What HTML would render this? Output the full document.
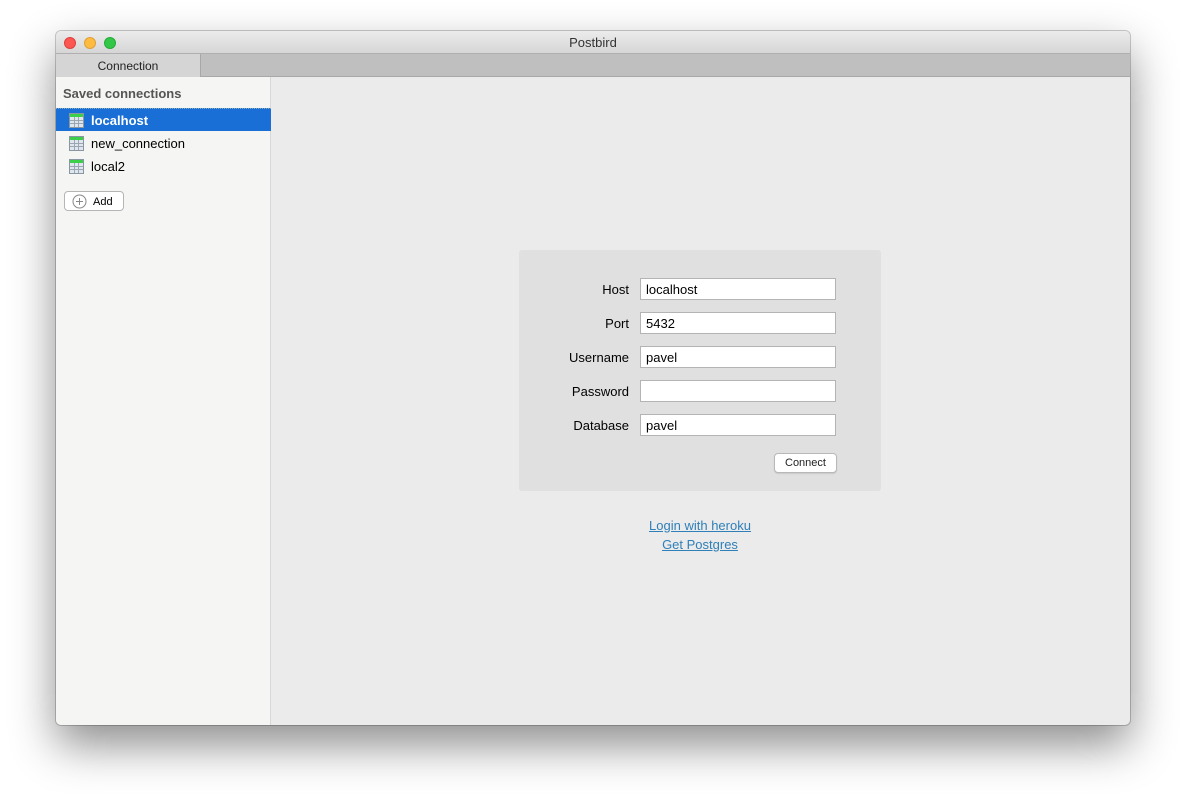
<!DOCTYPE html>
<html><head><meta charset="utf-8"><style>
*{margin:0;padding:0;box-sizing:border-box}
body{width:1186px;height:805px;background:#fff;font-family:"Liberation Sans",sans-serif;font-size:13px;position:relative;overflow:hidden;color:#000}
.win{position:absolute;left:56px;top:31px;width:1074px;height:694px;border-radius:5px;overflow:hidden;box-shadow:0 20px 45px rgba(0,0,0,.45),0 0 0 1px rgba(0,0,0,.2);background:#ebebeb}
.title{position:absolute;left:0;top:0;width:100%;height:22px;background:linear-gradient(#ececec,#d6d6d6);text-align:center;line-height:24px;color:#333;font-size:13px}
.dot{position:absolute;top:6px;width:12px;height:12px;border-radius:50%}
.tabs{position:absolute;left:0;top:22px;width:100%;height:24px;background:#c0bfc0;border-top:1px solid #b0b0b0;border-bottom:1px solid #a8a8a8}
.tab{position:absolute;left:0;top:0;width:145px;height:23px;background:#d6d5d6;border-right:1px solid #a8a8a8;text-align:center;line-height:24px;font-size:12px;color:#222}
.side{position:absolute;left:0;top:46px;width:215px;height:648px;background:#f5f5f3;border-right:1px solid #d8d8d8}
.side h3{font-size:13px;color:#555;font-weight:bold;position:absolute;left:7px;top:9px}
.item{position:absolute;left:0;width:215px;height:23px;line-height:23px;padding-left:35px;font-size:13px}
.item svg{position:absolute;left:13px;top:4px}
.sel{background:#1a6fd6;color:#fff;font-weight:bold;border-top:1px dotted #8ab}
.add{position:absolute;left:8px;top:114px;width:60px;height:20px;border:1px solid #b5b5b5;border-radius:4px;background:#fff;font-size:11px;line-height:20px;padding-left:28px}
.add svg{position:absolute;left:7px;top:2px}
.panel{position:absolute;left:463px;top:219px;width:362px;height:241px;background:#e0e0e0;border-radius:3px}
.lbl{position:absolute;width:110px;text-align:right;font-size:13px}
.inp{position:absolute;left:121px;width:196px;height:22px;background:#fff;border:1px solid #b4b4b4;padding-left:5px;line-height:22px;font-size:13px}
.btn{position:absolute;left:255px;top:203px;width:63px;height:20px;background:#fff;border:1px solid #b8b8b8;border-radius:4px;font-size:11px;text-align:center;line-height:19px;box-shadow:0 1px 1px rgba(0,0,0,.1);color:#222}
.lnk{position:absolute;left:463px;width:362px;text-align:center;color:#2f7fb8;text-decoration:underline;font-size:13px}
</style></head><body>
<div class="win">
<div class="title">Postbird
<div class="dot" style="left:8px;background:#fc5753;border:1px solid #de3f3b"></div>
<div class="dot" style="left:28px;background:#fdbc40;border:1px solid #dea034"></div>
<div class="dot" style="left:48px;background:#33c748;border:1px solid #27aa35"></div>
</div>
<div class="tabs"><div class="tab">Connection</div></div>
<div class="side">
<h3>Saved connections</h3>
<div class="item sel" style="top:31px"><svg width="15" height="15"><rect x=".5" y=".5" width="14" height="14" fill="#dfe6ee" stroke="#8a96a2"/><rect x="1" y="1" width="13" height="3" fill="#3bcf4a"/><path d="M1 7.5h13M1 10.5h13M5.5 4v10M9.5 4v10" stroke="#9aa6b2"/></svg>localhost</div>
<div class="item" style="top:55px"><svg width="15" height="15"><rect x=".5" y=".5" width="14" height="14" fill="#dfe6ee" stroke="#8a96a2"/><rect x="1" y="1" width="13" height="3" fill="#3bcf4a"/><path d="M1 7.5h13M1 10.5h13M5.5 4v10M9.5 4v10" stroke="#9aa6b2"/></svg>new_connection</div>
<div class="item" style="top:78px"><svg width="15" height="15"><rect x=".5" y=".5" width="14" height="14" fill="#dfe6ee" stroke="#8a96a2"/><rect x="1" y="1" width="13" height="3" fill="#3bcf4a"/><path d="M1 7.5h13M1 10.5h13M5.5 4v10M9.5 4v10" stroke="#9aa6b2"/></svg>local2</div>
<div class="add"><svg width="15" height="15"><circle cx="7.5" cy="7.5" r="6.5" fill="none" stroke="#888"/><path d="M7.5 4v7M4 7.5h7" stroke="#888"/></svg>Add</div>
</div>
<div class="panel">
<div class="lbl" style="top:32px">Host</div><div class="inp" style="top:28px">localhost</div>
<div class="lbl" style="top:66px">Port</div><div class="inp" style="top:62px">5432</div>
<div class="lbl" style="top:100px">Username</div><div class="inp" style="top:96px">pavel</div>
<div class="lbl" style="top:134px">Password</div><div class="inp" style="top:130px"></div>
<div class="lbl" style="top:168px">Database</div><div class="inp" style="top:164px">pavel</div>
<div class="btn">Connect</div>
</div>
<div class="lnk" style="top:487px">Login with heroku</div>
<div class="lnk" style="top:506px">Get Postgres</div>
</div>
</body></html>
